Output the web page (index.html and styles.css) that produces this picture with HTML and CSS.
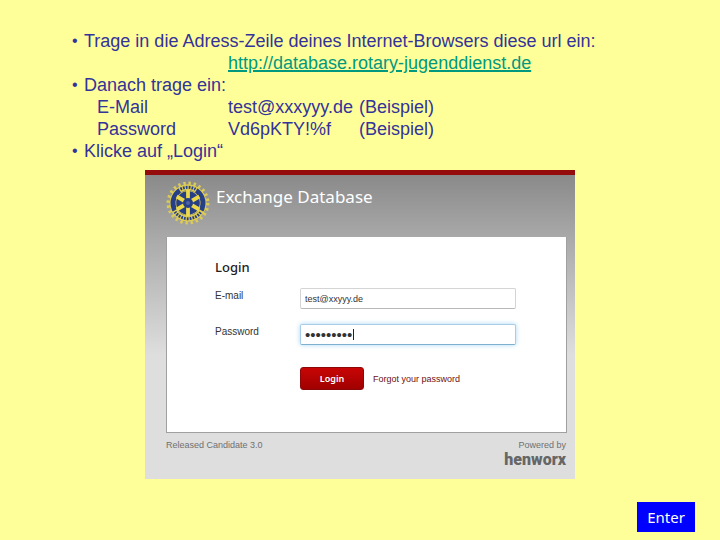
FILE: index.html
```html
<!DOCTYPE html>
<html lang="de">
<head>
  <meta charset="UTF-8">
  <meta name="viewport" content="width=device-width, initial-scale=1.0">
  <title>Exchange Database Login</title>
  <link rel="stylesheet" href="styles.css">
</head>
<body>

  <ul class="steps">
    <li>
      Trage in die Adress-Zeile deines Internet-Browsers diese url ein:
      <div class="url"><a href="http://database.rotary-jugenddienst.de">http://database.rotary-jugenddienst.de</a></div>
    </li>
    <li>
      Danach trage ein:
      <div class="example">
        <span>E-Mail</span>
        <span>test@xxxyyy.de</span>
        <span>(Beispiel)</span>
        <span>Password</span>
        <span>Vd6pKTY!%f</span>
        <span>(Beispiel)</span>
      </div>
    </li>
    <li>Klicke auf „Login“</li>
  </ul>

  <div class="window">
    <div class="window-header">
      <svg class="wheel" viewBox="-22 -22 44 44" aria-hidden="true">
        <circle r="19.5" fill="none" stroke="#dccb55" stroke-width="4" stroke-dasharray="2.3 2.8"/>
        <circle r="18.5" fill="#dccb55"/>
        <circle r="15" fill="none" stroke="#263f86" stroke-width="5"/>
        <path d="M-10 -15.500 A18.400 18.400 0 0 1 10 -15.500 L7 -10.500 A12.600 12.600 0 0 0 -7 -10.500 Z M-16 9.100 A18.400 18.400 0 0 0 16 9.100 L11 6 A12.600 12.600 0 0 1 -11 6 Z" fill="#dccb55"/>
        <path d="M-7.500 -13.800 A15.700 15.700 0 0 1 7.500 -13.800 M-13 8.800 A15.700 15.700 0 0 0 13 8.800" fill="none" stroke="#263f86" stroke-width="3" stroke-dasharray="1.700 1.100"/>
        <circle r="11.800" fill="#263f86"/>
        <g stroke="#ecd94a" stroke-width="3.800">
          <path d="M0 -13 V13"/>
          <path d="M-11.300 -6.500 L11.300 6.500"/>
          <path d="M-11.300 6.500 L11.300 -6.500"/>
        </g>
        <circle r="5" fill="#263f86"/>
        <circle r="2" fill="#4a66a8"/>
      </svg>
      <h1>Exchange Database</h1>
    </div>

    <form class="panel">
      <h2>Login</h2>
      <div class="row">
        <label for="email">E-mail</label>
        <input type="text" id="email" value="test@xxyyy.de">
      </div>
      <div class="row">
        <label for="password">Password</label>
        <div class="field">
          <input type="password" id="password" class="active" value="Vd6pKTY!%">
          <span class="caret"></span>
        </div>
      </div>
      <div class="actions">
        <button type="button" class="login">Login</button>
        <a href="#">Forgot your password</a>
      </div>
    </form>

    <div class="window-footer">
      <span>Released Candidate 3.0</span>
      <div class="powered">
        Powered by
        <strong>henworx</strong>
      </div>
    </div>
  </div>

  <button type="button" class="enter">Enter</button>

</body>
</html>
```
FILE: styles.css
```css
* {
  box-sizing: border-box;
}

body {
  display: flex;
  flex-direction: column;
  min-height: 100vh;
  margin: 0;
  padding: 30px 25px 8px;
  background-color: #ffff99;
  color: #333399;
  font-family: "Liberation Sans", Arial, sans-serif;
}

.steps {
  margin: 0 0 8px;
  padding: 0 0 0 47px;
  list-style: none;
  font-size: 18px;
  line-height: 22px;
}

.steps li {
  padding-left: 12px;
}

.steps li::before {
  content: "•";
  float: left;
  margin-left: -12px;
  font-size: 16px;
}

.url {
  padding-left: 144px;
}

.url a {
  color: #009980;
  text-decoration-thickness: 2px;
}

.example {
  display: grid;
  grid-template-columns: 131px 131px auto;
  justify-content: start;
  padding-left: 13px;
}

.window {
  width: 100%;
  max-width: 430px;
  margin: 0 auto;
  border-top: 5px solid #940c0c;
  background: linear-gradient(#8a8a8a, #a8a8a8 60px, #dedede 180px);
}

.window-header {
  display: flex;
  gap: 6px;
  padding: 6px 21px 12px;
}

.wheel {
  width: 44px;
  height: 44px;
}

h1 {
  margin: 4px 0 0;
  color: #ffffff;
  font-family: "Noto Sans", sans-serif;
  font-size: 17px;
  font-weight: 400;
  line-height: 24px;
}

.panel {
  margin: 0 8px 0 21px;
  padding: 20px 50px 42px 48px;
  border: 1px solid #a0a0a0;
  border-top: none;
  background-color: #ffffff;
  color: #333333;
  font-size: 9px;
}

h2 {
  margin: 0 0 11px;
  color: #222222;
  font-family: "Noto Sans", sans-serif;
  font-size: 13px;
  font-weight: 500;
  line-height: 20px;
}

.row {
  display: grid;
  grid-template-columns: 85px 1fr;
  margin-bottom: 15px;
}

.row label {
  padding-top: 2px;
  font-size: 10px;
}

.row input {
  display: block;
  width: 100%;
  height: 21px;
  padding: 0 4px;
  border: 1px solid #d4d4d4;
  border-bottom-color: #b8b8b8;
  border-radius: 2px;
  color: #333333;
  font-family: "Liberation Sans", Arial, sans-serif;
  font-size: 9px;
}

.field {
  position: relative;
}

.row input.active {
  border-color: #a9cde6;
  border-bottom-color: #7fb0d0;
  box-shadow: 0 0 5px #a8d8f5;
  font-size: 15px;
}

.caret {
  position: absolute;
  top: 5px;
  left: 53px;
  width: 1px;
  height: 11px;
  background-color: #222222;
}

.actions {
  display: flex;
  align-items: center;
  gap: 9px;
  margin-top: 22px;
  padding-left: 85px;
}

.login {
  width: 64px;
  height: 23px;
  padding: 0;
  border: 1px solid #8c0808;
  border-radius: 3px;
  background: linear-gradient(#c80505, #a00000);
  color: #ffffff;
  font-family: "Noto Sans", sans-serif;
  font-size: 9px;
  font-weight: 600;
}

.actions a {
  color: #6e1010;
  text-decoration: none;
}

.window-footer {
  display: flex;
  justify-content: space-between;
  padding: 6px 9px 10px 21px;
  color: #707070;
  font-size: 9px;
  line-height: 12px;
}

.powered {
  text-align: right;
}

.powered strong {
  display: block;
  color: #666666;
  font-family: Roboto, sans-serif;
  font-size: 16px;
  font-weight: 900;
  line-height: 18px;
}

.enter {
  align-self: flex-end;
  width: 58px;
  height: 30px;
  margin-top: auto;
  padding: 0;
  border: none;
  background-color: #0000ff;
  color: #ffffff;
  font-family: "Noto Sans", sans-serif;
  font-size: 15px;
}
```
